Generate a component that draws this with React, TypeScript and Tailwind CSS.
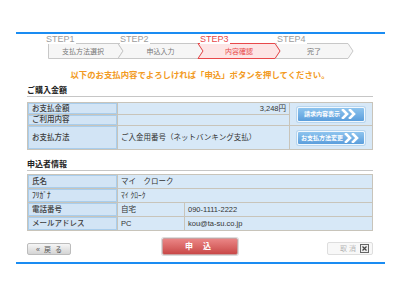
import React from "react";

type StepProps = { label: string; text: string; w: string; W: number; i: number; active?: boolean };

function Step({ label, text, w, W, i, active }: StepProps) {
  const stroke = active ? "#e8484a" : "#c8c8c8";
  const fill = active ? "#fde5e5" : "#f6f6f6";
  const pts =
    i === 0
      ? `0.5,0.5 ${W},0.5 ${W + 5},8 ${W},15.5 0.5,15.5`
      : `0,0.5 ${W},0.5 ${W + 5},8 ${W},15.5 0,15.5 5,8`;
  return (
    <div className={`relative h-[16px] shrink-0 ${w} ${active ? "z-10" : "z-0"}`}>
      <svg className="absolute left-0 top-0 overflow-visible" width={W + 6} height={16}>
        <polygon points={pts} fill={fill} stroke={stroke} strokeWidth={1} />
      </svg>
      <span
        className={`absolute top-[-9px] bg-white pr-[1px] font-['Liberation_Sans',sans-serif] text-[9px] leading-[10px] ${
          i === 0 ? "left-[-2px]" : "left-[2px]"
        } ${active ? "text-[#e8484a]" : "text-[#9c9c9c]"}`}
      >
        {label}
      </span>
      <div
        className={`relative flex h-full items-center justify-center text-[7px] leading-none ${
          i === 0 ? "pl-0" : "pl-[5px]"
        } ${active ? "text-[#e8484a]" : "text-[#777777]"}`}
      >
        {text}
      </div>
    </div>
  );
}

function Chevrons() {
  return (
    <svg width="17" height="10" viewBox="0 0 17 10" className="shrink-0">
      <path d="M2 1 L6 5 L2 9" fill="none" stroke="#ffffff" strokeWidth="2.6" strokeLinecap="square" />
      <path d="M9 1 L13 5 L9 9" fill="none" stroke="#ffffff" strokeWidth="2.6" strokeLinecap="square" />
    </svg>
  );
}

function BlueBtn({ children, h }: { children: React.ReactNode; h: string }) {
  return (
    <div
      className={`flex w-[68px] ${h} items-center justify-center gap-[1px] rounded-[2px] border border-[#f2f8fd] bg-gradient-to-b from-[#8ec4ee] to-[#5b9edc] shadow-[0_0_0_1px_#b7d5ee]`}
    >
      <span className="text-[6px] font-bold leading-none text-white">{children}</span>
      <Chevrons />
    </div>
  );
}

function Label({ children }: { children: React.ReactNode }) {
  return (
    <div className="flex items-center bg-[#d2e4f5] pl-[4px] text-[7.5px] font-medium leading-none text-[#3c3c3c] shadow-[inset_0_0_0_1px_#a9cdec]">
      {children}
    </div>
  );
}

function Cell({ children, className }: { children?: React.ReactNode; className?: string }) {
  return (
    <div className={`flex items-center bg-[#d7e8f7] text-[7.5px] leading-none text-[#333333] ${className ?? "pl-[3px]"}`}>
      {children}
    </div>
  );
}

export default function App() {
  return (
    <div className="h-[300px] w-[400px] overflow-hidden bg-white pt-[32px] font-['Liberation_Sans','Noto_Sans_CJK_JP',sans-serif] text-[#333333]">
      <div className="ml-[16px] h-[2px] w-[369px] bg-[#1a8cf2]" />

      <div className="ml-[48px] mt-[9px] flex">
        <Step label="STEP1" text="支払方法選択" w="w-[70px]" W={70} i={0} />
        <Step label="STEP2" text="申込入力" w="w-[80px]" W={80} i={1} />
        <Step label="STEP3" text="内容確認" w="w-[77px]" W={77} i={2} active />
        <Step label="STEP4" text="完了" w="w-[73px]" W={73} i={3} />
      </div>

      <div className="mt-[11px] text-center text-[8.4px] font-bold leading-[10px] text-[#f29a22]">
        以下のお支払内容でよろしければ「申込」ボタンを押してください。
      </div>

      <div className="mx-[27px] mt-[6px] h-[11px] border-b border-[#c6c6c6] text-[8px] font-bold leading-[10px] text-[#222222]">
        ご購入金額
      </div>

      <div className="mx-[27px] mt-[5px] grid grid-cols-[89px_171px_1fr] grid-rows-[11px_10px_23px] gap-px bg-[#c8c4ba] p-px">
        <Label>お支払金額</Label>
        <Cell className="justify-end pr-[3px]">3,248円</Cell>
        <div className="row-span-2 flex items-center justify-center bg-[#d7e8f7]">
          <BlueBtn h="h-[15px]">請求内容表示</BlueBtn>
        </div>
        <Label>ご利用内容</Label>
        <Cell />
        <Label>お支払方法</Label>
        <Cell>ご入金用番号（ネットバンキング支払）</Cell>
        <div className="flex items-center justify-center bg-[#d7e8f7]">
          <BlueBtn h="h-[14px]">お支払方法変更</BlueBtn>
        </div>
      </div>

      <div className="mx-[27px] mt-[10px] h-[11px] border-b border-[#c6c6c6] text-[8px] font-bold leading-[10px] text-[#222222]">
        申込者情報
      </div>

      <div className="mx-[27px] mt-[3px] grid grid-cols-[89px_66px_1fr] grid-rows-[13px_13px_13px_13px] gap-px bg-[#c8c4ba] p-px">
        <Label>氏名</Label>
        <div className="col-span-2 flex items-center bg-[#d7e8f7] pl-[3px] text-[7.5px] leading-none">マイ　クローク</div>
        <Label>ﾌﾘｶﾞﾅ</Label>
        <div className="col-span-2 flex items-center bg-[#d7e8f7] pl-[3px] text-[7.5px] leading-none">ﾏｲ ｸﾛｰｸ</div>
        <Label>電話番号</Label>
        <Cell>自宅</Cell>
        <Cell>090-1111-2222</Cell>
        <Label>メールアドレス</Label>
        <Cell>PC</Cell>
        <Cell>kou@ta-su.co.jp</Cell>
      </div>

      <div className="mx-[27px] mt-[7px] grid h-[17px] grid-cols-[1fr_auto_1fr] items-end">
        <div className="flex h-[12px] w-[44px] items-center justify-center gap-[4px] rounded-[2px] border border-[#bcbcbc] bg-gradient-to-b from-[#f6f6f6] to-[#d4d4d4] text-[7px] leading-none text-[#555555]">
          <span>«</span>
          <span>戻</span>
          <span>る</span>
        </div>
        <div className="flex h-[17px] w-[76px] items-center justify-center rounded-[2px] border border-[#c9a0a0] bg-gradient-to-b from-[#ea8585] to-[#c94848] text-[8px] font-bold leading-none tracking-[4px] text-white shadow-[0_0_0_1px_#dcdcdc]">
          申 込
        </div>
        <div className="flex h-[13px] w-[46px] items-center justify-end gap-[4px] justify-self-end rounded-[2px] border border-[#dedede] bg-[#f8f8f8] pr-[3px] text-[7px] leading-none text-[#b4b4b4]">
          <span>取 消</span>
          <svg width="9" height="9" viewBox="0 0 9 9">
            <rect x="0.5" y="0.5" width="8" height="8" fill="#eeeeee" stroke="#666666" />
            <path d="M2.5 2.5 L6.5 6.5 M6.5 2.5 L2.5 6.5" stroke="#444444" strokeWidth="1.2" />
          </svg>
        </div>
      </div>

      <div className="ml-[16px] mt-[7px] h-[2px] w-[369px] bg-[#1a8cf2]" />
    </div>
  );
}
